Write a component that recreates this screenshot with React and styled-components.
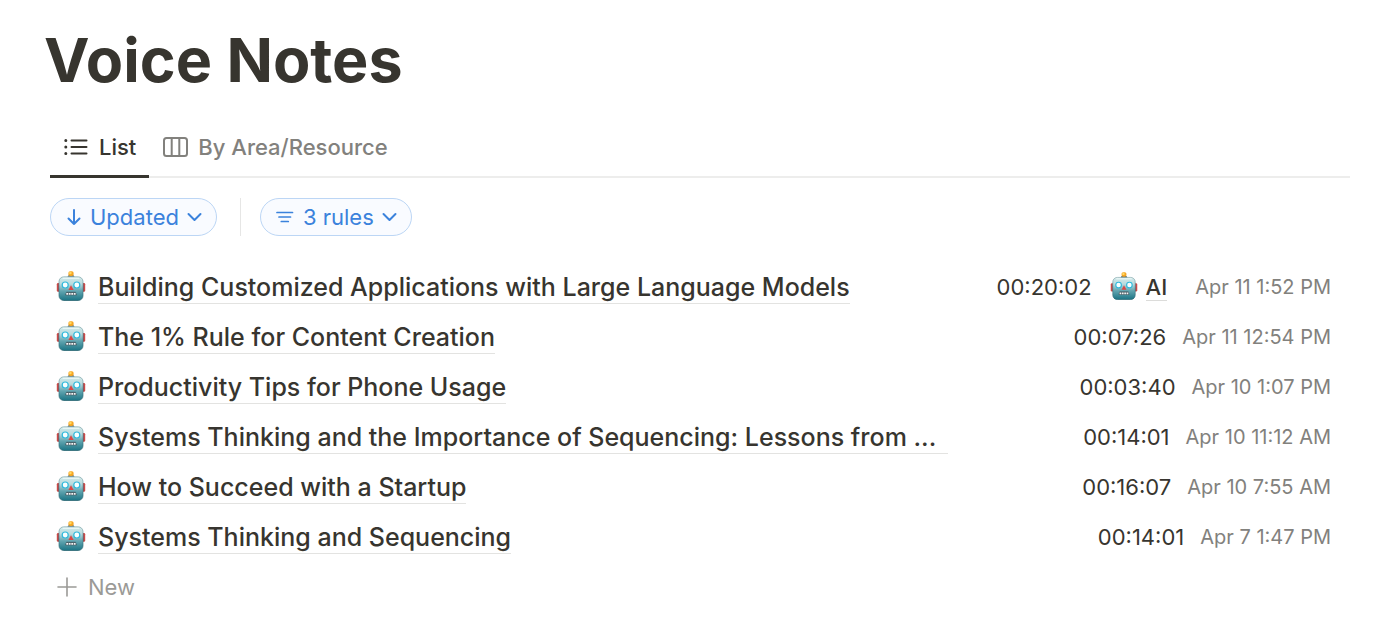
import React from "react";
import styled, { createGlobalStyle } from "styled-components";

const GlobalStyle = createGlobalStyle`
  *, *::before, *::after { box-sizing: border-box; }
  body {
    margin: 0;
    background: #ffffff;
    color: #37352f;
    font-family: Inter, "Liberation Sans", sans-serif;
  }
`;

const Page = styled.main`
  padding: 20px 50px 6px;
`;

const Title = styled.h1`
  margin: 0 0 0 -6px;
  font-size: 61px;
  line-height: 80px;
  font-weight: 700;
`;

const Tabs = styled.nav`
  display: flex;
  margin-top: 16px;
  border-bottom: 2px solid #ededec;
`;

const Tab = styled.button`
  display: flex;
  align-items: center;
  gap: 10px;
  height: 62px;
  margin-bottom: -2px;
  padding: 2px 13px 0 14px;
  border: 0;
  border-bottom: 3px solid ${(p) => (p.$active ? "#37352f" : "transparent")};
  background: none;
  color: ${(p) => (p.$active ? "#37352f" : "#82817d")};
  font-family: inherit;
  font-size: 22px;
  line-height: 28px;
  font-weight: 500;
  white-space: nowrap;
  cursor: pointer;
`;

const Filters = styled.div`
  display: flex;
  align-items: center;
  margin-top: 20px;
`;

const Pill = styled.button`
  display: flex;
  align-items: center;
  gap: 8px;
  height: 38px;
  padding: 0 14px;
  border: 1px solid #bcd6f5;
  border-radius: 19px;
  background: #f9fbff;
  color: #3b82dc;
  font-family: inherit;
  font-size: 22px;
  line-height: 28px;
  font-weight: 400;
  white-space: nowrap;
  cursor: pointer;
`;

const Divider = styled.span`
  width: 1px;
  height: 38px;
  margin: 0 19px 0 23px;
  background: #e6e6e5;
`;

const List = styled.ul`
  margin: 26px 0 0;
  padding: 0;
  list-style: none;
`;

const Row = styled.li`
  display: flex;
  align-items: center;
  gap: 12px;
  height: 50px;
  padding: 0 19px 0 6px;
`;

const NoteLink = styled.a`
  flex: 0 1 ${(p) => (p.$truncated ? "850px" : "auto")};
  min-width: 0;
  overflow: hidden;
  padding-top: 1px;
  border-bottom: 1px solid #e3e3e1;
  color: inherit;
  font-size: 25px;
  line-height: 32px;
  font-weight: 500;
  text-decoration: none;
  text-overflow: ellipsis;
  white-space: nowrap;
`;

const Details = styled.div`
  display: flex;
  align-items: center;
  gap: 16px;
  margin-left: auto;
  flex-shrink: 0;
`;

const Duration = styled.span`
  font-size: 22px;
  line-height: 28px;
`;

const Area = styled.span`
  display: flex;
  align-items: center;
  gap: 8px;
  padding: 0 12px 0 2px;
`;

const AreaLink = styled.a`
  border-bottom: 1px solid #dcdcda;
  color: inherit;
  font-size: 22px;
  line-height: 26px;
  font-weight: 500;
  text-decoration: none;
`;

const Updated = styled.time`
  color: #82817d;
  font-size: 20px;
  line-height: 28px;
`;

const NewButton = styled.button`
  display: flex;
  align-items: center;
  gap: 11px;
  height: 50px;
  padding: 0 7px;
  border: 0;
  background: none;
  color: #9b9a97;
  font-family: inherit;
  font-size: 22px;
  line-height: 28px;
  cursor: pointer;
`;

const Svg = styled.svg`
  display: block;
  flex: none;
`;

const Emoji = styled(Svg)`
  margin-bottom: 2px;
`;

const stroke = {
  fill: "none",
  stroke: "currentColor",
  strokeLinecap: "round",
  strokeLinejoin: "round",
  "aria-hidden": true,
};

const ListIcon = () => (
  <Svg width="25" height="20" viewBox="0 0 25 20" {...stroke} strokeWidth="2">
    <path d="M7.500 3.500h15M7.500 10h15M7.500 16.500h15" />
    <path d="M1.800 3.500h.01M1.800 10h.01M1.800 16.500h.01" strokeWidth="3" />
  </Svg>
);

const BoardIcon = () => (
  <Svg width="25" height="20" viewBox="0 0 25 20" {...stroke} strokeWidth="2">
    <rect x="1" y="1" width="23" height="18" rx="2.500" />
    <path d="M8.700 1.500v17M16.300 1.500v17" />
  </Svg>
);

const ArrowDown = () => (
  <Svg width="17" height="18" viewBox="0 0 17 18" {...stroke} strokeWidth="2">
    <path d="M9 2v14M3.500 10.500L9 16l5.500-5.500" />
  </Svg>
);

const RulesIcon = () => (
  <Svg width="20" height="14" viewBox="0 0 20 14" {...stroke} strokeWidth="1.700">
    <path d="M2 2.500h15.500M4 7h11.500M6.300 11.500h7" />
  </Svg>
);

const Chevron = () => (
  <Svg width="15" height="10" viewBox="0 0 15 10" {...stroke} strokeWidth="2">
    <path d="M1.500 2l6 6 6-6" />
  </Svg>
);

const PlusIcon = () => (
  <Svg width="20" height="20" viewBox="0 0 20 20" {...stroke} strokeWidth="1.600">
    <path d="M10 1v18M1 10h18" />
  </Svg>
);

const Robot = ({ size = 30 }) => (
  <Emoji width={size} height={size} viewBox="0 0 30 30" aria-hidden="true">
    <defs>
      <linearGradient id="robot-face" x1="0" y1="0" x2="0" y2="1">
        <stop offset="0" stopColor="#d3eaea" />
        <stop offset=".3" stopColor="#b9dbde" />
        <stop offset=".6" stopColor="#62a5b0" />
        <stop offset="1" stopColor="#1b7484" />
      </linearGradient>
      <linearGradient id="robot-edge" x1="0" y1="0" x2="0" y2="1">
        <stop offset="0" stopColor="#86a9ad" />
        <stop offset="1" stopColor="#1d5c69" />
      </linearGradient>
    </defs>
    <rect x=".8" y="12" width="4.500" height="8.800" rx="1.300" fill="#cb4a48" />
    <rect x="24.700" y="12" width="4.500" height="8.800" rx="1.300" fill="#cb4a48" />
    <path d="M3 12.500v8M27 12.500v8" stroke="#713940" strokeWidth=".8" />
    <path d="M11.300 6.500Q12 3.600 15 3.600T18.700 6.500z" fill="#57696f" />
    <rect x="12.400" y="0.200" width="5.200" height="4.800" rx="1.700" fill="#f5a623" />
    <rect x="13.200" y="0.700" width="2.400" height="2.600" rx="1" fill="#ffd965" />
    <rect x="3" y="5.800" width="24" height="23.700" rx="4.800" fill="url(#robot-face)" stroke="url(#robot-edge)" strokeWidth=".7" />
    <path d="M7 7.300h16" stroke="#effafa" strokeWidth="1" strokeLinecap="round" />
    <circle cx="9.200" cy="14" r="3.600" fill="#30b9dc" />
    <circle cx="20.800" cy="14" r="3.600" fill="#30b9dc" />
    <circle cx="9.200" cy="14" r="2.400" fill="#f8ffff" />
    <circle cx="20.800" cy="14" r="2.400" fill="#f8ffff" />
    <path d="M15 14.200l2.600 4.800h-5.200z" fill="#dc4643" />
    <path d="M10.500 21.200h9l1 2.900h-11z" fill="#4a5b63" stroke="#4a5b63" strokeWidth=".6" strokeLinejoin="round" />
    <path d="M10.300 22.900h9.400" stroke="#f4f6f6" strokeWidth="1.800" strokeDasharray="1.800 .7" />
  </Emoji>
);

const notes = [
  { title: "Building Customized Applications with Large Language Models", duration: "00:20:02", area: "AI", updated: "Apr 11 1:52 PM" },
  { title: "The 1% Rule for Content Creation", duration: "00:07:26", updated: "Apr 11 12:54 PM" },
  { title: "Productivity Tips for Phone Usage", duration: "00:03:40", updated: "Apr 10 1:07 PM" },
  { title: "Systems Thinking and the Importance of Sequencing: Lessons from ...", duration: "00:14:01", updated: "Apr 10 11:12 AM", truncated: true },
  { title: "How to Succeed with a Startup", duration: "00:16:07", updated: "Apr 10 7:55 AM" },
  { title: "Systems Thinking and Sequencing", duration: "00:14:01", updated: "Apr 7 1:47 PM" },
];

export default function App() {
  return (
    <>
      <GlobalStyle />
      <Page>
        <Title>Voice Notes</Title>
        <Tabs>
          <Tab type="button" $active><ListIcon />List</Tab>
          <Tab type="button"><BoardIcon />By Area/Resource</Tab>
        </Tabs>
        <Filters>
          <Pill type="button"><ArrowDown />Updated<Chevron /></Pill>
          <Divider />
          <Pill type="button"><RulesIcon />3 rules<Chevron /></Pill>
        </Filters>
        <List>
          {notes.map((note) => (
            <Row key={note.title}>
              <Robot />
              <NoteLink href="#" $truncated={note.truncated}>{note.title}</NoteLink>
              <Details>
                <Duration>{note.duration}</Duration>
                {note.area && (
                  <Area>
                    <Robot size={28} />
                    <AreaLink href="#">{note.area}</AreaLink>
                  </Area>
                )}
                <Updated>{note.updated}</Updated>
              </Details>
            </Row>
          ))}
        </List>
        <NewButton type="button"><PlusIcon />New</NewButton>
      </Page>
    </>
  );
}
